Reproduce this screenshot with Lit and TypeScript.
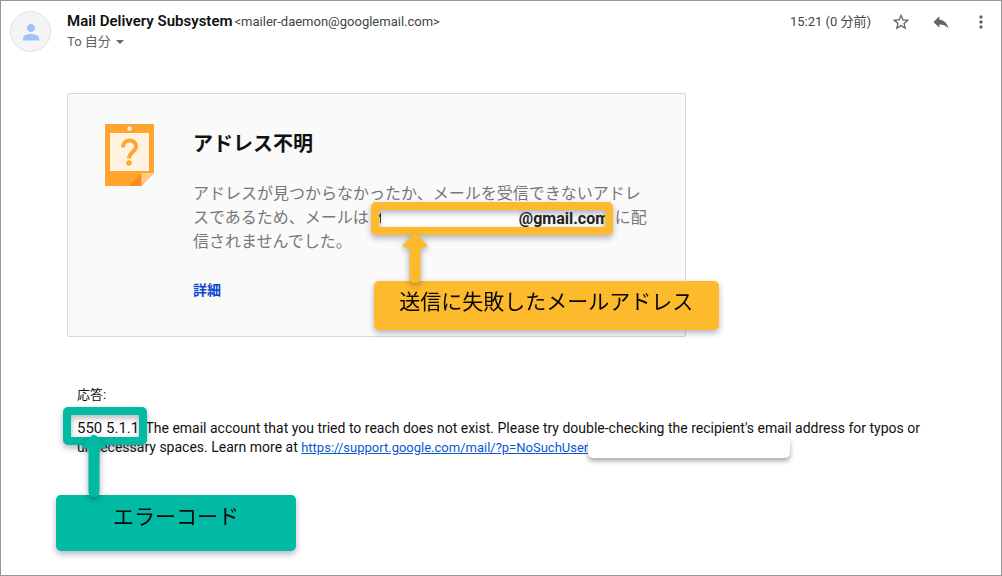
import { LitElement, html, css, svg } from "lit";
import { customElement, property } from "lit/decorators.js";

const ICONS = {
  star: svg`<path d="M22 9.24l-7.19-.62L12 2 9.19 8.63 2 9.24l5.46 4.73L5.82 21 12 17.27 18.18 21l-1.63-7.03L22 9.24zM12 15.4l-3.76 2.27 1-4.28-3.32-2.88 4.38-.38L12 6.1l1.71 4.04 4.38.38-3.32 2.88 1 4.28L12 15.4z"/>`,
  reply: svg`<path d="M10 9V5l-7 7 7 7v-4.1c5 0 8.5 1.6 11 5.1-1-5-4-10-11-11z"/>`,
  more: svg`<path d="M12 8c1.1 0 2-.9 2-2s-.9-2-2-2-2 .9-2 2 .9 2 2 2zm0 2c-1.1 0-2 .9-2 2s.9 2 2 2 2-.9 2-2-.9-2-2-2zm0 6c-1.1 0-2 .9-2 2s.9 2 2 2 2-.9 2-2-.9-2-2-2z"/>`,
  person: svg`<path d="M12 12c2.21 0 4-1.79 4-4s-1.79-4-4-4-4 1.79-4 4 1.79 4 4 4zm0 2c-2.67 0-8 1.34-8 4v2.500h16V18c0-2.660-5.330-4-8-4z"/>`,
};

/** Upward arrow that ties a callout to the framed text above it. */
@customElement("callout-arrow")
class CalloutArrow extends LitElement {
  @property({ type: Number }) length = 48;

  static styles = css`
    :host {
      display: block;
      color: inherit;
    }
    .arrow {
      display: block;
      overflow: visible;
      fill: currentColor;
      filter: drop-shadow(0 2px 3px rgba(0, 0, 0, 0.35));
    }
  `;

  render() {
    const end = this.length;
    return html`<svg class="arrow" width="26" height=${end} viewBox="0 0 26 ${end}" aria-hidden="true">
      <path d="M13 0q1.500 0 2.500 1l9 9.500q1.500 2.500-1 3q-2.500 0-5 0V${end - 5.5}a5.500 5.500 0 0 1-11 0V13.500q-2.500 0-5 0q-2.500-.5-1-3l9-9.500q0-1 1.500-1z"/>
    </svg>`;
  }
}

@customElement("app-root")
class AppRoot extends LitElement {
  static styles = css`
    :host {
      display: block;
      font-family: Roboto, "Noto Sans CJK JP", sans-serif;
      color: #202124;
    }
    .page {
      box-sizing: border-box;
      min-height: 100vh;
      border: 1px solid #999;
      background: #fff;
    }
    .header {
      display: flex;
      align-items: flex-start;
      gap: 16px;
      padding: 10px 10px 0 9px;
    }
    .avatar {
      display: grid;
      place-items: center;
      box-sizing: border-box;
      width: 41px;
      height: 41px;
      border: 1px solid #dfe1ee;
      border-radius: 50%;
      background: #f4f4f4;
      fill: #a0c2f8;
    }
    .sender {
      flex: 1;
    }
    .line {
      display: flex;
      align-items: baseline;
      gap: 2px;
      line-height: 20px;
      font-size: 13px;
      color: #444;
    }
    .name {
      margin: 0;
      font-size: 15px;
      font-weight: 600;
      color: #111;
    }
    .recipient {
      display: flex;
      align-items: center;
      gap: 5px;
      padding: 0;
      border: 0;
      background: none;
      font: inherit;
      font-size: 13px;
      line-height: 20px;
      color: #5f6368;
    }
    .caret {
      border: 4px solid transparent;
      border-top-color: #666;
      border-bottom: 0;
    }
    .meta {
      display: flex;
      align-items: center;
      gap: 20px;
      height: 22px;
    }
    .time {
      font-size: 13px;
      line-height: 22px;
      color: #444;
    }
    .icon-button {
      display: flex;
      padding: 0;
      border: 0;
      background: none;
      fill: #666;
    }
    .card {
      display: flex;
      align-items: flex-start;
      gap: 39px;
      box-sizing: border-box;
      max-width: 619px;
      margin: 41px 16px 0 66px;
      padding: 30px 32px 34px 37px;
      border: 1px solid #d8d8d8;
      border-radius: 2px;
      background: #fafafa;
    }
    .note {
      flex: none;
    }
    .title {
      margin: 5px 0 23px;
      font-size: 20px;
      line-height: 30px;
      font-weight: 700;
      color: #111;
    }
    .reason {
      margin: 0 0 24px;
      font-size: 16px;
      line-height: 24px;
      color: #777;
    }
    .details {
      font-size: 14px;
      line-height: 24px;
      font-weight: 700;
      color: #0b48cc;
      text-decoration: none;
    }
    .anchor {
      position: relative;
      display: inline-block;
    }
    .address {
      width: 246px;
      height: 24px;
      vertical-align: top;
    }
    .window {
      position: absolute;
      left: 10px;
      top: 4px;
      right: 9px;
      display: flex;
      height: 18px;
      overflow: hidden;
      background: #f6f6f6;
      line-height: 18px;
      font-weight: 700;
      color: #222;
    }
    .initial {
      flex: none;
      width: 2px;
      overflow: hidden;
    }
    .blank {
      flex: none;
      width: 138px;
      background: #fff;
    }
    .frame {
      position: absolute;
      box-sizing: border-box;
      border: 8px solid;
      border-radius: 5px;
    }
    .amber {
      color: #fdba2c;
    }
    .teal {
      color: #00baa3;
    }
    .frame,
    .label {
      filter: drop-shadow(0 3px 3px rgba(40, 40, 70, 0.35));
    }
    .address .frame {
      inset: -4px 2px -5px 2px;
    }
    .pointer {
      position: absolute;
      z-index: 2;
    }
    .address .pointer {
      left: 33px;
      top: 28px;
    }
    .label {
      position: absolute;
      z-index: 1;
      box-sizing: border-box;
      border-radius: 5px;
      background: currentColor;
      font-size: 21px;
      line-height: 32px;
      text-align: center;
      white-space: nowrap;
    }
    .label-text {
      color: #080808;
    }
    .address .label {
      left: 5px;
      top: 75px;
      width: 345px;
      padding: 5px 0 12px;
    }
    .response {
      margin: 48px 48px 0 76px;
      font-size: 14px;
      line-height: 19px;
      color: #111;
    }
    .response-title {
      margin: 0 0 15px;
      font-size: 13px;
      line-height: 19px;
      font-weight: 400;
    }
    .message {
      margin: 0;
    }
    .code {
      margin-right: 3px;
      font-size: 15px;
    }
    .code .frame {
      inset: -12px -8px -7px -14px;
    }
    .code .pointer {
      left: 4px;
      top: 16px;
    }
    .code .label {
      left: -21px;
      top: 76px;
      width: 240px;
      padding: 6px 0 18px;
    }
    .support {
      font-size: 13px;
      color: #0b57d0;
    }
    .redacted {
      display: inline-block;
      width: 202px;
      height: 21px;
      margin-top: -1px;
      border-radius: 5px;
      background: #fff;
      box-shadow: 0 3px 5px rgba(0, 0, 0, 0.35);
      vertical-align: top;
    }
  `;

  icon(name: keyof typeof ICONS, size: number) {
    return html`<svg width=${size} height=${size} viewBox="0 0 24 24" aria-hidden="true">${ICONS[name]}</svg>`;
  }

  header() {
    return html`<header class="header">
      <div class="avatar">${this.icon("person", 24)}</div>
      <div class="sender">
        <div class="line"><h1 class="name">Mail Delivery Subsystem</h1><span>&lt;mailer-daemon@googlemail.com&gt;</span></div>
        <button class="recipient">To 自分<span class="caret"></span></button>
      </div>
      <div class="meta">
        <span class="time">15:21 (0 分前)</span>
        <button class="icon-button" aria-label="スター">${this.icon("star", 20)}</button>
        <button class="icon-button" aria-label="返信">${this.icon("reply", 20)}</button>
        <button class="icon-button" aria-label="その他">${this.icon("more", 20)}</button>
      </div>
    </header>`;
  }

  noteIcon() {
    return html`<svg class="note" width="49" height="62" viewBox="0 0 49 62" aria-hidden="true">
      <path fill="#ffa42e" d="M0 0h49v49L36.500 62H0z"/>
      <path fill="#ff8c1a" d="M24 62L36.500 49V62z"/>
      <path fill="#ffcc8a" d="M36.500 49H49L36.500 62z"/>
      <circle cx="24.500" cy="4.500" r="2.200" fill="#fff3e0"/>
      <path fill="#fff3e0" d="M5 9h39v38H5z"/>
      <path fill="none" stroke="#ffa42e" stroke-width="4" d="M18 23.500c0-4.500 2.800-7 6.500-7s6.500 2.300 6.500 6c0 5-7 5.500-7 12"/>
      <circle cx="24" cy="39" r="2.700" fill="#ffa42e"/>
    </svg>`;
  }

  render() {
    return html`<main class="page">
      ${this.header()}
      <section class="card">
        ${this.noteIcon()}
        <div>
          <h2 class="title">アドレス不明</h2>
          <p class="reason">アドレスが見つからなかったか、メールを受信できないアドレスであるため、メールは<span class="anchor address"><span class="window"><span class="initial">t</span><span class="blank"></span><span>@gmail.com</span></span><span class="frame amber"></span><callout-arrow class="pointer amber" length="49"></callout-arrow><span class="label amber"><span class="label-text">送信に失敗したメールアドレス</span></span></span>に配信されませんでした。</p>
          <a class="details" href="#details">詳細</a>
        </div>
      </section>
      <section class="response">
        <h3 class="response-title">応答:</h3>
        <p class="message"><span class="anchor code">550 5.1.1<span class="frame teal"></span><callout-arrow class="pointer teal" length="62"></callout-arrow><span class="label teal"><span class="label-text">エラーコード</span></span></span> The email account that you tried to reach does not exist. Please try double-checking the recipient's email address for typos or unnecessary spaces. Learn more at <a class="support" href="https://support.google.com/mail/?p=NoSuchUser">https://support.google.com/mail/?p=NoSuchUser</a><span class="redacted"></span></p>
      </section>
    </main>`;
  }
}
